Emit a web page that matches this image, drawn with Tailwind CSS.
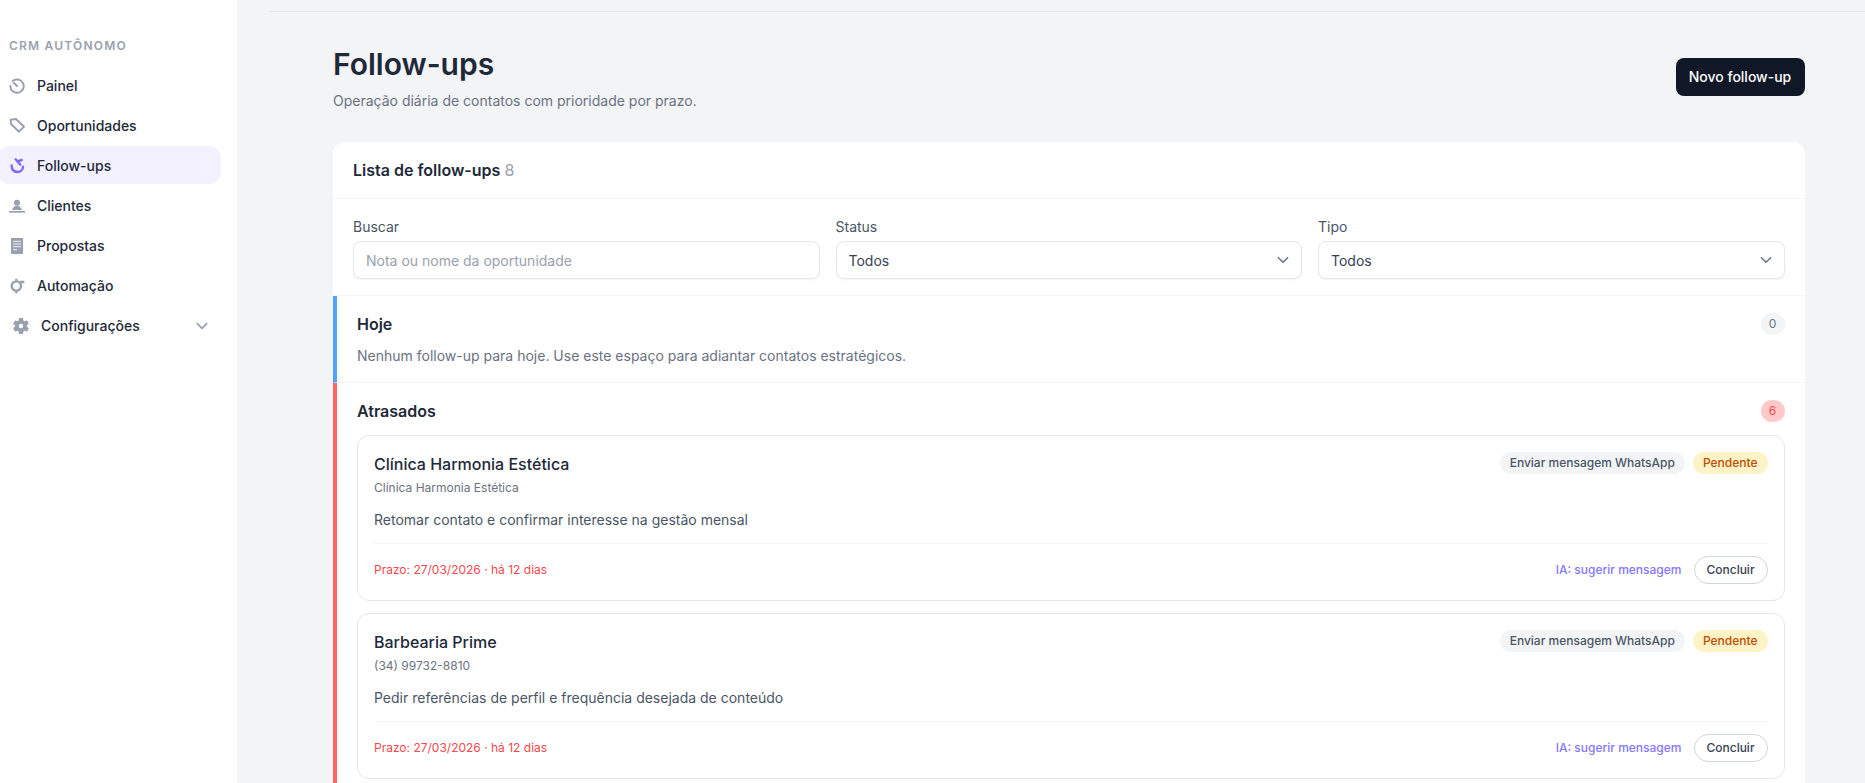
<!DOCTYPE html>
<html lang="pt-BR">
<head>
  <meta charset="UTF-8" />
  <title>Follow-ups - CRM Autônomo</title>
  <script src="https://cdn.jsdelivr.net/npm/@tailwindcss/browser@4"></script>
</head>
<body class="bg-gray-100 [font-family:Inter,sans-serif] text-gray-800">
  <div class="flex h-screen overflow-hidden">
    <!-- Sidebar -->
    <aside class="w-[237px] shrink-0 bg-white pt-[38px] pr-4">
      <p class="pl-[9px] text-xs leading-4 font-semibold tracking-widest text-gray-400">CRM AUTÔNOMO</p>
      <nav class="mt-[12px] flex flex-col gap-0.5 text-sm font-medium">
        <a href="#" class="flex h-[38px] items-center gap-3 rounded-xl pt-px pl-[9px]">
          <svg class="size-4 text-gray-400" viewBox="0 0 24 24" fill="none" stroke="currentColor" stroke-width="3" stroke-linecap="round"><path d="M5.500 4.600A10 10 0 1 1 2 12"/><path d="M7.500 7.500l4.500 4.500"/></svg>
          Painel
        </a>
        <a href="#" class="flex h-[38px] items-center gap-3 rounded-xl pt-px pl-[9px]">
          <svg class="size-4 text-gray-400" viewBox="0 0 24 24" fill="none" stroke="currentColor" stroke-width="3" stroke-linejoin="round"><path d="M2.500 2.500 10.500 1.500 22.500 13 15 20.500 3 9z"/></svg>
          Oportunidades
        </a>
        <a href="#" class="-ml-[2px] flex h-[38px] items-center gap-3 rounded-xl bg-[#f3f0ff] pt-px pl-[11px]">
          <svg class="size-4 text-[#8066ff]" viewBox="0 0 24 24" fill="none" stroke="currentColor" stroke-width="3.600" stroke-linecap="round" stroke-linejoin="round"><path d="M4 11c0 7 3.500 10 8.500 10 5 0 8.500-3.500 8.500-8"/><path d="M10 2l7 8"/><path d="M13 5l6-2"/></svg>
          Follow-ups
        </a>
        <a href="#" class="flex h-[38px] items-center gap-3 rounded-xl pt-px pl-[9px]">
          <svg class="size-4 text-gray-400" viewBox="0 0 24 24" fill="currentColor"><circle cx="12" cy="7" r="4.500"/><path d="M4.500 18c1-4 4-6.500 7.500-6.500s6.500 2.500 7.500 6.500z"/><rect x="0" y="19.500" width="24" height="2.500"/></svg>
          Clientes
        </a>
        <a href="#" class="flex h-[38px] items-center gap-3 rounded-xl pt-px pl-[9px]">
          <svg class="size-4 text-gray-400" viewBox="0 0 24 24"><path fill="currentColor" d="M3 0h18v24H3z"/><path stroke="#fff" stroke-width="1.300" d="M6 5h12M6 9h12M6 13h12M6 17.500h6"/></svg>
          Propostas
        </a>
        <a href="#" class="flex h-[38px] items-center gap-3 rounded-xl pt-px pl-[9px]">
          <svg class="size-4 text-gray-400" viewBox="0 0 24 24" fill="none" stroke="currentColor" stroke-width="3.600"><circle cx="11" cy="12" r="7"/><path d="M11 1v3M11 20v3M16 6h7"/></svg>
          Automação
        </a>
        <a href="#" class="flex h-[38px] items-center pt-px pr-[12px] pl-[11px]">
          <svg class="size-5 text-gray-400" viewBox="0 0 24 24" fill="currentColor"><path d="M19.140 12.940c.04-.3.06-.61.06-.94 0-.32-.02-.64-.07-.94l2.030-1.580c.18-.14.23-.41.12-.61l-1.920-3.320c-.12-.22-.37-.29-.59-.22l-2.390.96c-.5-.38-1.030-.7-1.620-.94l-.36-2.540c-.04-.24-.24-.41-.48-.41h-3.840c-.24 0-.43.17-.47.41l-.36 2.540c-.59.24-1.130.57-1.620.94l-2.390-.96c-.22-.08-.47 0-.59.22L2.740 8.870c-.12.21-.08.47.12.61l2.030 1.580c-.05.3-.09.63-.09.94s.02.64.07.94l-2.030 1.580c-.18.14-.23.41-.12.61l1.920 3.320c.12.22.37.29.59.22l2.390-.96c.5.38 1.030.7 1.620.94l.36 2.540c.05.24.24.41.48.41h3.840c.24 0 .44-.17.47-.41l.36-2.540c.59-.24 1.130-.56 1.620-.94l2.390.96c.22.08.47 0 .59-.22l1.920-3.320c.12-.22.07-.47-.12-.61l-2.010-1.580zM12 14.700a2.700 2.700 0 1 1 0-5.400 2.700 2.700 0 0 1 0 5.400z"/></svg>
          <span class="ml-2.5 flex-1">Configurações</span>
          <svg class="size-3.5 text-gray-400" viewBox="0 0 24 24" fill="none" stroke="currentColor" stroke-width="3" stroke-linecap="round" stroke-linejoin="round"><path d="M4 8l8 8 8-8"/></svg>
        </a>
      </nav>
    </aside>

    <!-- Main -->
    <div class="min-w-0 flex-1">
      <div class="ml-8 h-3 border-b border-gray-200"></div>
      <main class="pr-[60.5px] pl-[96px]">
        <div class="flex items-start justify-between pt-[34px]">
          <div>
            <h1 class="text-3xl leading-9 font-semibold text-gray-800">Follow-ups</h1>
            <p class="mt-[9px] text-sm leading-5 text-gray-500">Operação diária de contatos com prioridade por prazo.</p>
          </div>
          <button class="mt-[12px] h-[38px] w-[129px] rounded-lg bg-gray-900 text-sm font-medium text-white">Novo follow-up</button>
        </div>

        <section class="mt-[31px] rounded-t-xl bg-white pb-10">
          <div class="flex h-[57px] items-center border-b border-gray-100 px-5">
            <h2 class="text-base font-semibold text-gray-800">Lista de follow-ups <span class="font-normal text-gray-400">8</span></h2>
          </div>

          <div class="grid grid-cols-3 gap-4 border-b border-gray-100 px-5 pt-[18px] pb-4">
            <label class="block">
              <span class="block text-sm leading-5 text-gray-600">Buscar</span>
              <input type="text" placeholder="Nota ou nome da oportunidade" class="mt-1 block h-[38px] w-full rounded-lg border border-gray-200 bg-white px-3 pt-px text-sm shadow-xs outline-none placeholder:text-gray-400" />
            </label>
            <label class="block">
              <span class="block text-sm leading-5 text-gray-600">Status</span>
              <span class="relative mt-1 block">
                <select class="block h-[38px] w-full appearance-none rounded-lg border border-gray-200 bg-white px-3 pt-px text-sm text-gray-700 shadow-xs outline-none"><option>Todos</option></select>
                <svg class="absolute top-3 right-3 size-3.5 text-gray-500" viewBox="0 0 24 24" fill="none" stroke="currentColor" stroke-width="2.600" stroke-linecap="round" stroke-linejoin="round"><path d="M4 8l8 8 8-8"/></svg>
              </span>
            </label>
            <label class="block">
              <span class="block text-sm leading-5 text-gray-600">Tipo</span>
              <span class="relative mt-1 block">
                <select class="block h-[38px] w-full appearance-none rounded-lg border border-gray-200 bg-white px-3 pt-px text-sm text-gray-700 shadow-xs outline-none"><option>Todos</option></select>
                <svg class="absolute top-3 right-3 size-3.5 text-gray-500" viewBox="0 0 24 24" fill="none" stroke="currentColor" stroke-width="2.600" stroke-linecap="round" stroke-linejoin="round"><path d="M4 8l8 8 8-8"/></svg>
              </span>
            </label>
          </div>

          <!-- Hoje -->
          <div class="border-b border-l-4 border-b-gray-100 border-l-blue-400 pt-4 pr-5 pb-4 pl-5">
            <div class="flex items-center justify-between">
              <h3 class="text-base leading-6 font-semibold text-gray-800">Hoje</h3>
              <span class="flex h-[22px] w-6 items-center justify-center rounded-full bg-gray-100 text-xs text-gray-500">0</span>
            </div>
            <p class="mt-2.5 text-sm leading-5 text-gray-500">Nenhum follow-up para hoje. Use este espaço para adiantar contatos estratégicos.</p>
          </div>

          <!-- Atrasados -->
          <div class="border-l-4 border-l-red-400 pt-4 pr-5 pb-10 pl-5">
            <div class="flex items-center justify-between">
              <h3 class="text-base leading-6 font-semibold text-gray-800">Atrasados</h3>
              <span class="flex h-[22px] w-6 items-center justify-center rounded-full bg-red-200 text-xs text-[#f8474f]">6</span>
            </div>

            <div class="mt-3 flex flex-col gap-3">
              <article class="rounded-xl border border-gray-200 p-4">
                <div class="flex items-start justify-between">
                  <div>
                    <h4 class="text-base leading-6 font-medium text-gray-800">Clínica Harmonia Estética</h4>
                    <p class="mt-1 text-xs leading-4 text-gray-500">Clínica Harmonia Estética</p>
                  </div>
                  <div class="flex gap-2">
                    <span class="flex h-[22px] items-center rounded-full bg-gray-100 px-2.5 text-xs font-medium text-gray-600">Enviar mensagem WhatsApp</span>
                    <span class="flex h-[22px] items-center rounded-full bg-amber-100 px-2.5 text-xs font-medium text-amber-700">Pendente</span>
                  </div>
                </div>
                <p class="mt-3.5 text-sm leading-5 text-gray-600">Retomar contato e confirmar interesse na gestão mensal</p>
                <div class="mt-[13px] flex items-center justify-between border-t border-gray-100 pt-3">
                  <span class="text-xs text-[#f8474f]">Prazo: 27/03/2026 · há 12 dias</span>
                  <div class="flex items-center gap-3">
                    <a href="#" class="text-xs font-medium text-[#8577ff]">IA: sugerir mensagem</a>
                    <button class="h-7 w-[74px] rounded-full border border-gray-300 bg-white text-xs font-medium text-gray-700">Concluir</button>
                  </div>
                </div>
              </article>

              <article class="rounded-xl border border-gray-200 p-4">
                <div class="flex items-start justify-between">
                  <div>
                    <h4 class="text-base leading-6 font-medium text-gray-800">Barbearia Prime</h4>
                    <p class="mt-1 text-xs leading-4 text-gray-500">(34) 99732-8810</p>
                  </div>
                  <div class="flex gap-2">
                    <span class="flex h-[22px] items-center rounded-full bg-gray-100 px-2.5 text-xs font-medium text-gray-600">Enviar mensagem WhatsApp</span>
                    <span class="flex h-[22px] items-center rounded-full bg-amber-100 px-2.5 text-xs font-medium text-amber-700">Pendente</span>
                  </div>
                </div>
                <p class="mt-3.5 text-sm leading-5 text-gray-600">Pedir referências de perfil e frequência desejada de conteúdo</p>
                <div class="mt-[13px] flex items-center justify-between border-t border-gray-100 pt-3">
                  <span class="text-xs text-[#f8474f]">Prazo: 27/03/2026 · há 12 dias</span>
                  <div class="flex items-center gap-3">
                    <a href="#" class="text-xs font-medium text-[#8577ff]">IA: sugerir mensagem</a>
                    <button class="h-7 w-[74px] rounded-full border border-gray-300 bg-white text-xs font-medium text-gray-700">Concluir</button>
                  </div>
                </div>
              </article>
            </div>
          </div>
        </section>
      </main>
    </div>
  </div>
</body>
</html>
